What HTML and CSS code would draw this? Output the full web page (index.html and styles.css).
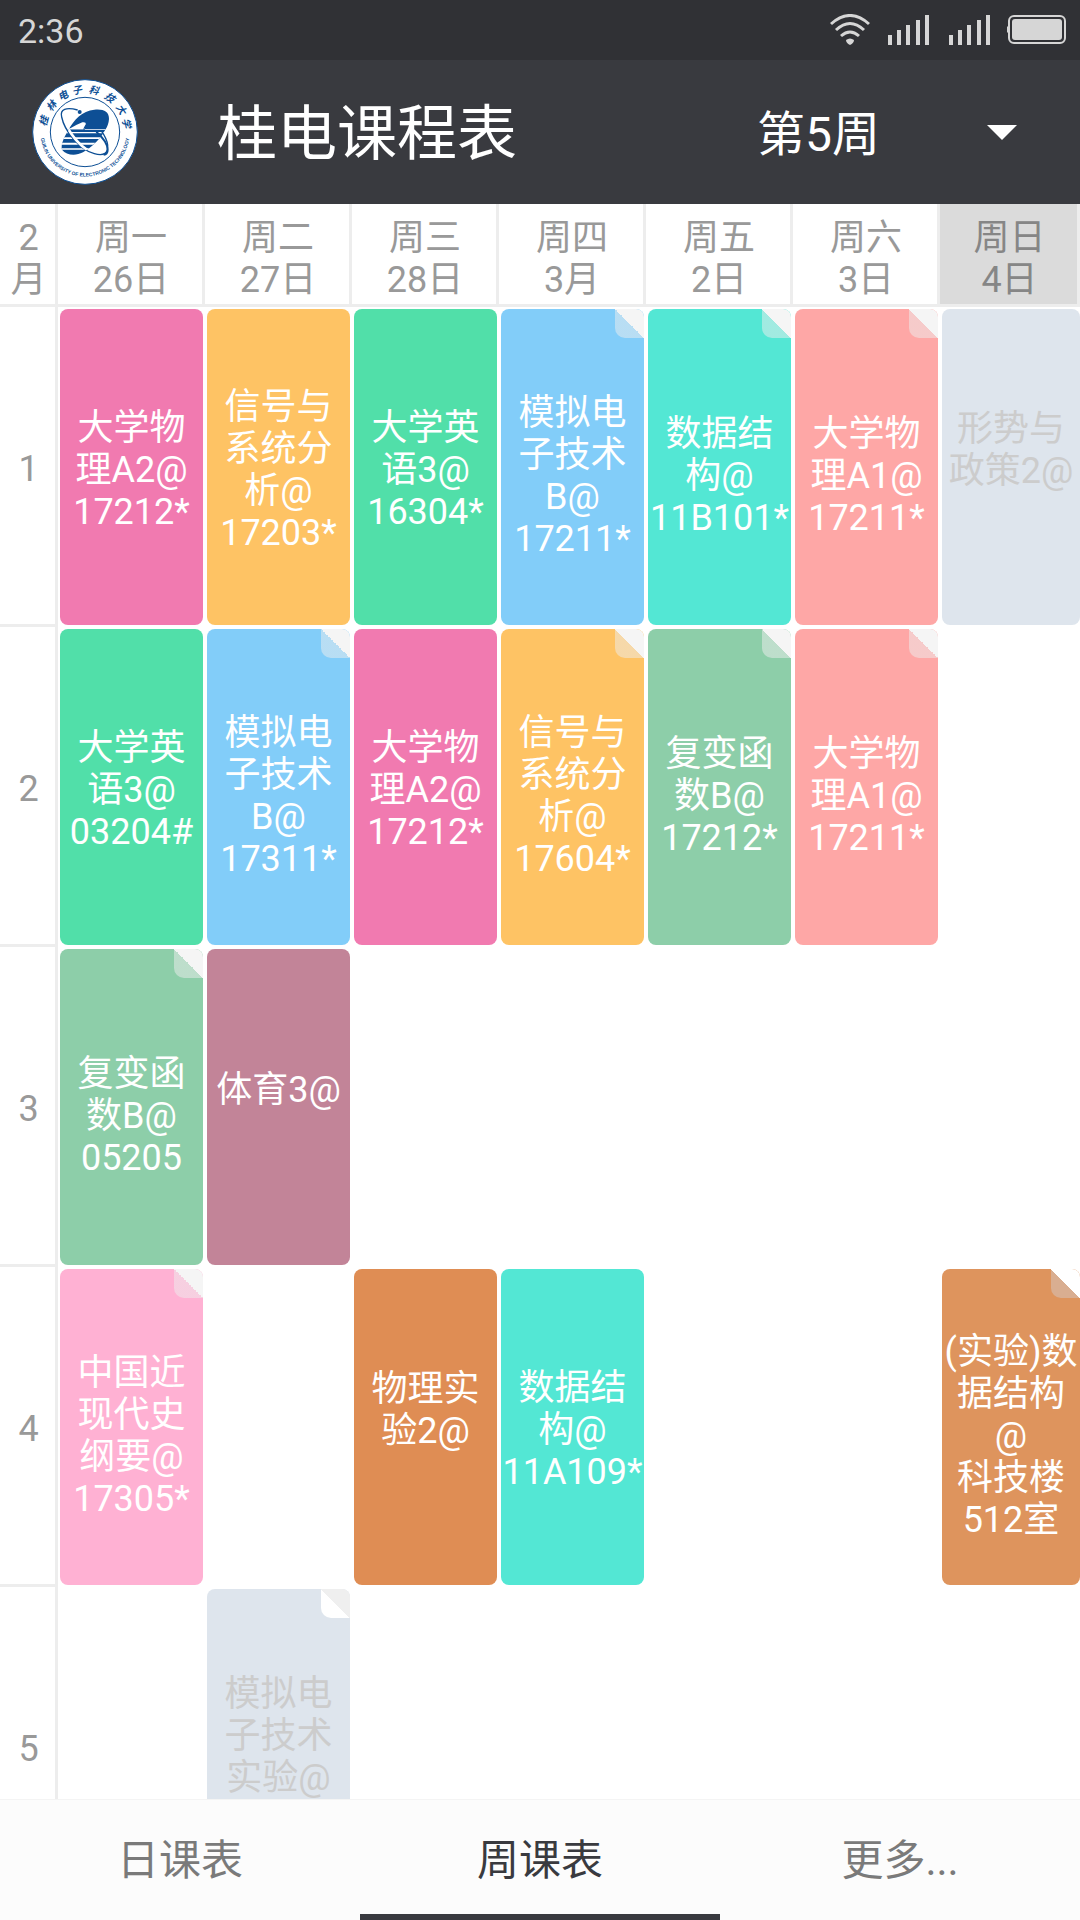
FILE: index.html
```html
<!DOCTYPE html>
<html lang="zh-CN">
<head>
<meta charset="utf-8">
<meta name="viewport" content="width=device-width, initial-scale=1">
<title>桂电课程表</title>
<link rel="stylesheet" href="styles.css">
</head>
<body>
<div class="status">
  <time class="status-time">2:36</time>
  <svg class="icon-wifi" viewBox="0 0 40 32" aria-hidden="true">
    <g fill="none" stroke="currentColor" stroke-width="3">
      <path d="M1 10Q20-7 39 10"/>
      <path d="M6 16Q20 3 34 16"/>
      <path d="M11 22Q20 14 29 22"/>
    </g>
    <path d="M16 26Q20 23 24 26Q24 29 20 31Q16 29 16 26Z" fill="currentColor"/>
  </svg>
  <svg class="icon-signal" viewBox="0 0 41 30" fill="currentColor" aria-hidden="true"><path d="M0 20h4v10h-4zM9 15h4v15h-4zM18 10h4v20h-4zM28 5h4v25h-4zM37 0h4v30h-4z"/></svg>
  <svg class="icon-signal" viewBox="0 0 41 30" fill="currentColor" aria-hidden="true"><path d="M0 20h4v10h-4zM9 15h4v15h-4zM18 10h4v20h-4zM28 5h4v25h-4zM37 0h4v30h-4z"/></svg>
  <svg class="icon-battery" viewBox="0 0 60 30" aria-hidden="true">
    <path d="M3 10v9l-2-2v-5z" fill="currentColor"/>
    <rect x="3" y="1" width="56" height="27" rx="5" fill="none" stroke="currentColor" stroke-width="2"/>
    <rect x="6" y="4" width="50" height="21" rx="3" fill="currentColor"/>
  </svg>
</div>

<header class="bar">
  <svg class="logo" viewBox="35 28 318 318" role="img" aria-label="桂林电子科技大学">
    <defs>
      <path id="rim" d="M68 141A134 134 0 1 0 320 141"/>
      <clipPath id="globe"><path id="globe-shape" d="M144 182C160 150 186 124 222 120C248 117 267 125 266 148C265 160 262 170 254 182C240 208 214 234 188 248C164 260 138 256 125 240C121 226 130 204 144 182Z"/></clipPath>
    </defs>
    <circle class="logo-disc" cx="194" cy="187" r="157"/>
    <circle class="logo-ring" cx="194" cy="187" r="104"/>
    <g class="logo-name">
      <text x="194" y="70" transform="rotate(-75 194 187)">桂</text>
      <text x="194" y="70" transform="rotate(-52 194 187)">林</text>
      <text x="194" y="70" transform="rotate(-31 194 187)">电</text>
      <text x="194" y="70" transform="rotate(-11 194 187)">子</text>
      <text x="194" y="70" transform="rotate(12 194 187)">科</text>
      <text x="194" y="70" transform="rotate(36 194 187)">技</text>
      <text x="194" y="70" transform="rotate(58 194 187)">大</text>
      <text x="194" y="70" transform="rotate(78 194 187)">学</text>
    </g>
    <text class="logo-english"><textPath href="#rim" startOffset="50%">GUILIN UNIVERSITY OF ELECTRONIC TECHNOLOGY</textPath></text>
    <use href="#globe-shape" class="logo-fill"/>
    <g clip-path="url(#globe)" class="logo-cut">
      <path d="M110 177h84v4h80v-2h-164zM110 187h164v4h-164zM110 203h164v5h-164zM110 219h164v6h-164zM110 236h164v4h-164z"/>
      <path d="M146 178Q166 166 186 158Q198 156 196 164L188 179H146Z"/>
    </g>
    <path class="logo-orbit" d="M172 121C138 112 118 118 124 142C132 182 176 240 222 252C252 260 264 250 262 226C260 208 252 196 242 182"/>
    <path class="logo-orbit-cut" clip-path="url(#globe)" d="M136 164C154 198 184 236 222 252"/>
    <path class="logo-orbit-wide" d="M228 186C248 204 262 224 262 240C262 248 258 254 250 255"/>
    <circle class="logo-fill" cx="178" cy="127" r="6"/>
  </svg>
  <h1 class="title">桂电课程表</h1>
  <div class="week">
    <select class="week-select" aria-label="周次">
      <option>第4周</option>
      <option selected>第5周</option>
      <option>第6周</option>
    </select>
    <svg class="week-arrow" viewBox="0 0 30 15" aria-hidden="true"><path d="M0 0h30L15 15z" fill="currentColor"/></svg>
  </div>
</header>

<main class="schedule">
<table class="timetable">
  <colgroup><col class="col-period"><col><col><col><col><col><col><col class="col-last"></colgroup>
  <thead>
    <tr>
      <th scope="col">2<br>月</th>
      <th scope="col">周一<br>26日</th>
      <th scope="col">周二<br>27日</th>
      <th scope="col">周三<br>28日</th>
      <th scope="col">周四<br>3月</th>
      <th scope="col">周五<br>2日</th>
      <th scope="col">周六<br>3日</th>
      <th scope="col" class="today">周日<br>4日</th>
    </tr>
  </thead>
  <tbody>
    <tr>
      <th scope="row">1</th>
      <td><div class="card pink">大学物<br>理A2@<br>17212*</div></td>
      <td><div class="card orange">信号与<br>系统分<br>析@<br>17203*</div></td>
      <td><div class="card green">大学英<br>语3@<br>16304*</div></td>
      <td><div class="card blue folded">模拟电<br>子技术<br>B@<br>17211*</div></td>
      <td><div class="card teal folded">数据结<br>构@<br>11B101*</div></td>
      <td><div class="card salmon folded">大学物<br>理A1@<br>17211*</div></td>
      <td><div class="card idle no-room">形势与<br>政策2@</div></td>
    </tr>
    <tr>
      <th scope="row">2</th>
      <td><div class="card green">大学英<br>语3@<br>03204#</div></td>
      <td><div class="card blue folded">模拟电<br>子技术<br>B@<br>17311*</div></td>
      <td><div class="card pink">大学物<br>理A2@<br>17212*</div></td>
      <td><div class="card orange folded">信号与<br>系统分<br>析@<br>17604*</div></td>
      <td><div class="card sage folded">复变函<br>数B@<br>17212*</div></td>
      <td><div class="card salmon folded">大学物<br>理A1@<br>17211*</div></td>
      <td></td>
    </tr>
    <tr>
      <th scope="row">3</th>
      <td><div class="card sage folded">复变函<br>数B@<br>05205</div></td>
      <td><div class="card mauve no-room">体育3@</div></td>
      <td></td><td></td><td></td><td></td><td></td>
    </tr>
    <tr>
      <th scope="row">4</th>
      <td><div class="card rose folded">中国近<br>现代史<br>纲要@<br>17305*</div></td>
      <td></td>
      <td><div class="card brown no-room">物理实<br>验2@</div></td>
      <td><div class="card teal">数据结<br>构@<br>11A109*</div></td>
      <td></td><td></td>
      <td><div class="card copper folded">(实验)数<br>据结构<br>@<br>科技楼<br>512室</div></td>
    </tr>
    <tr>
      <th scope="row">5</th>
      <td></td>
      <td><div class="card idle folded no-room">模拟电<br>子技术<br>实验@</div></td>
      <td></td><td></td><td></td><td></td><td></td>
    </tr>
  </tbody>
</table>
</main>

<nav class="tabs">
  <a class="tab" href="#day">日课表</a>
  <a class="tab active" href="#week" aria-current="page">周课表</a>
  <a class="tab" href="#more">更多...</a>
</nav>
</body>
</html>
```

FILE: styles.css
```css
* {
  box-sizing: border-box;
}

body {
  margin: 0;
  height: 100vh;
  display: flex;
  flex-direction: column;
  background: #fff;
  font-family: Roboto, "Noto Sans CJK SC", sans-serif;
}

/* Status bar */
.status {
  flex: none;
  display: flex;
  align-items: center;
  height: 60px;
  padding: 0 14px 0 18px;
  background: #303135;
  color: #d6d6d6;
}

.status-time {
  flex: 1;
  padding-top: 2px;
  font-size: 34px;
  line-height: 40px;
}

.icon-wifi {
  width: 40px;
  height: 32px;
  margin-right: 18px;
}

.icon-signal {
  width: 41px;
  height: 30px;
  margin-right: 20px;
}

.icon-signal + .icon-signal {
  margin-right: 16px;
}

.icon-battery {
  width: 60px;
  height: 30px;
}

/* App bar */
.bar {
  flex: none;
  display: flex;
  align-items: center;
  height: 144px;
  padding: 0 63px 0 32px;
  background: #393a3f;
  color: #fff;
}

.logo {
  flex: none;
  width: 106px;
  height: 106px;
  margin-right: 79px;
}

.logo-disc {
  fill: #fff;
  stroke: #0d4f95;
  stroke-width: 3;
}

.logo-ring {
  fill: none;
  stroke: #0d4f95;
  stroke-width: 3;
}

.logo-name {
  fill: #0d4f95;
  font-size: 30px;
  font-weight: 700;
  font-style: italic;
  text-anchor: middle;
}

.logo-english {
  fill: #0d4f95;
  font-family: "Liberation Sans", sans-serif;
  font-size: 15px;
  font-weight: 700;
  text-anchor: middle;
}

.logo-fill {
  fill: #0d4f95;
}

.logo-cut {
  fill: #fff;
}

.logo-orbit {
  fill: none;
  stroke: #0d4f95;
  stroke-width: 4;
}

.logo-orbit-wide {
  fill: none;
  stroke: #0d4f95;
  stroke-width: 6;
}

.logo-orbit-cut {
  fill: none;
  stroke: #fff;
  stroke-width: 8;
}

.title {
  flex: 1;
  margin: 0;
  padding-top: 6px;
  font-size: 60px;
  font-weight: 400;
  line-height: 72px;
}

.week {
  display: grid;
  align-items: center;
  width: 260px;
}

.week-select {
  grid-area: 1 / 1;
  appearance: none;
  width: 100%;
  padding: 6px 0 0;
  border: 0;
  background: transparent;
  color: inherit;
  font-family: inherit;
  font-size: 48px;
  line-height: 60px;
}

.week-arrow {
  grid-area: 1 / 1;
  justify-self: end;
  width: 30px;
  height: 15px;
  pointer-events: none;
}

/* Timetable */
.schedule {
  flex: 1;
  min-height: 0;
  overflow: hidden;
}

.timetable {
  width: 100%;
  table-layout: fixed;
  border-collapse: separate;
  border-spacing: 0;
  font-size: 36px;
  line-height: 42px;
  text-align: center;
}

.col-period {
  width: 58px;
}

.col-last {
  width: 140px;
}

.timetable th {
  padding: 6px 0 0 2px;
  border: solid #ededed;
  border-width: 0 3px 3px 0;
  color: #999;
  font-weight: 400;
}

.timetable thead th {
  height: 103px;
  padding-top: 9px;
}

.timetable thead .today {
  background: #dbdbdb;
  color: #868686;
}

.timetable td {
  height: 320px;
  padding: 2px;
}

.timetable td:last-child {
  padding-right: 0;
}

.card {
  position: relative;
  display: flow-root;
  align-content: center;
  height: 316px;
  padding-top: 6px;
  border-radius: 8px;
  color: #fff;
  white-space: nowrap;
}

.card.no-room {
  padding-bottom: 40px;
}

.card.folded {
  padding-top: 18px;
}

.folded::after {
  content: "";
  position: absolute;
  top: 0;
  right: 0;
  width: 29px;
  height: 29px;
  border-radius: 0 8px 0 10px;
  background: linear-gradient(to top right, rgba(238, 238, 238, 0.5) 50%, #f5f5f5 50%);
}

.idle.folded::after {
  background: linear-gradient(to top right, #fff 50%, #efefef 50%);
}

.copper.folded::after {
  background: linear-gradient(to top right, #d9ae91 50%, #fff 50%);
}

.pink { background: #f17ab0; }
.orange { background: #fec364; }
.green { background: #51dfa9; }
.blue { background: #82cdf9; }
.teal { background: #53e7d4; }
.salmon { background: #fea7a6; }
.sage { background: #8dcea9; }
.mauve { background: #c28498; }
.rose { background: #ffb1d3; }
.brown { background: #df8d54; }
.copper { background: #de945d; }
.idle { background: #dee5ed; color: #ccc; }

/* Bottom tabs */
.tabs {
  flex: none;
  display: flex;
  height: 121px;
  border-top: 1px solid #f4f4f4;
  background: #fcfcfc;
}

.tab {
  flex: 1;
  padding-top: 8px;
  border-bottom: 6px solid transparent;
  color: #7a7a7a;
  font-size: 42px;
  line-height: 106px;
  text-align: center;
  text-decoration: none;
}

.tab.active {
  border-bottom-color: #393a3f;
  color: #393a3f;
}
```
